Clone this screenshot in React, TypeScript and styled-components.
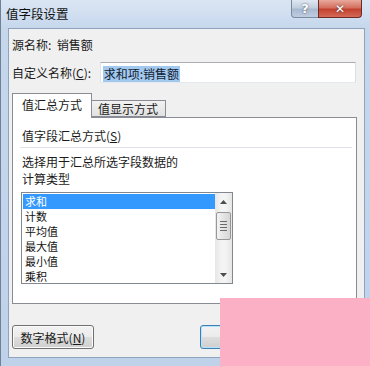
import styled, { createGlobalStyle } from 'styled-components';

const GlobalStyle = createGlobalStyle`
  html, body {
    margin: 0;
    padding: 0;
    background: #ffffff;
  }
  body {
    font-family: 'Noto Sans CJK SC', 'Noto Sans', sans-serif;
    font-size: 12px;
    color: #1a1a1a;
  }
`;

const Window = styled.div`
  position: relative;
  width: 370px;
  height: 366px;
  overflow: hidden;
  box-sizing: border-box;
  border-left: 1px solid #6f8197;
  background: linear-gradient(to bottom, #dbe6f4 0px, #c6d7ec 28px, #bfd2ea 100%);
`;

const TitleBar = styled.div`
  height: 28px;
  display: flex;
  align-items: flex-start;
`;

const Title = styled.div`
  padding: 6px 0 0 5px;
  font-size: 12.5px;
  line-height: 16px;
  color: #111;
`;

const Captions = styled.div`
  margin-left: auto;
  margin-right: 8px;
  display: flex;
`;

const CaptionButton = styled.div<{ $close?: boolean }>`
  width: ${({ $close }) => ($close ? 44 : 28)}px;
  height: 18px;
  box-sizing: border-box;
  border: 1px solid ${({ $close }) => ($close ? '#6e2b24' : '#7a8aa0')};
  border-top: none;
  border-radius: ${({ $close }) => ($close ? '0 0 4px 0' : '0 0 0 4px')};
  margin-left: ${({ $close }) => ($close ? -1 : 0)}px;
  background: ${({ $close }) =>
    $close
      ? 'linear-gradient(to bottom, #e8a99d 0%, #d4705f 45%, #c2412e 55%, #d66a58 100%)'
      : 'linear-gradient(to bottom, #dfe7f1 0%, #c3cfdf 45%, #a9b9cf 55%, #bfcde0 100%)'};
  display: flex;
  align-items: center;
  justify-content: center;
  color: #fff;
  font-family: 'DejaVu Sans', sans-serif;
  font-weight: bold;
  font-size: ${({ $close }) => ($close ? 12 : 13)}px;
  text-shadow: 0 0 2px rgba(40, 50, 70, 0.9);
`;

const Client = styled.div`
  margin: 0 5px 0 7px;
  height: 330px;
  box-sizing: border-box;
  border: 1px solid #8ea3bd;
  background: #f0f0f0;
  padding: 8px 8px 0 3px;
  display: flex;
  flex-direction: column;
`;

const Line = styled.div`
  line-height: 16px;
  height: 16px;
  white-space: nowrap;
`;

const NameRow = styled.div`
  margin-top: 9px;
  display: flex;
  align-items: center;
  height: 21px;
`;

const Label = styled.div`
  width: 88px;
  line-height: 16px;
  white-space: nowrap;
`;

const TextBox = styled.div`
  width: 257px;
  height: 21px;
  box-sizing: border-box;
  border: 1px solid #abadb3;
  border-color: #abadb3 #dbdfe6 #e3e9ef #e2e3ea;
  background: #fff;
  padding: 2px 0 0 2px;
`;

const Selected = styled.span`
  background: #a3c8ee;
  color: #0f1c33;
  line-height: 16px;
  display: inline-block;
  padding: 0 1px;
`;

const TabStrip = styled.div`
  margin-top: 10px;
  display: flex;
  align-items: flex-end;
  height: 24px;
  position: relative;
  z-index: 1;
`;

const Tab = styled.div<{ $active?: boolean }>`
  box-sizing: border-box;
  height: ${({ $active }) => ($active ? 25 : 17)}px;
  margin-bottom: ${({ $active }) => ($active ? -1 : 0)}px;
  border: 1px solid #898c95;
  border-bottom: ${({ $active }) => ($active ? 'none' : '1px solid #898c95')};
  background: ${({ $active }) =>
    $active ? '#ffffff' : 'linear-gradient(to bottom, #f2f2f2, #e1e1e1)'};
  padding: ${({ $active }) => ($active ? '3px 9px 0 9px' : '0 6px')};
  margin-left: ${({ $active }) => ($active ? 0 : -1)}px;
  line-height: 15px;
  white-space: nowrap;
  font-size: 12px;
  width: ${({ $active }) => ($active ? 80 : 75)}px;
`;

const Panel = styled.div`
  width: 345px;
  height: 187px;
  box-sizing: border-box;
  border: 1px solid #898c95;
  background: #fff;
  padding: 10px 0 0 9px;
`;

const Separator = styled.div`
  margin: 3px 4px 5px -2px;
  height: 1px;
  background: #dfe3e8;
`;

const Para = styled.div`
  line-height: 17px;
  white-space: nowrap;
`;

const ListBox = styled.div`
  margin: 5px 0 0 -1px;
  width: 212px;
  height: 92px;
  box-sizing: border-box;
  border: 1px solid #828790;
  display: flex;
  padding: 1px 0 0 1px;
  overflow: hidden;
`;

const Items = styled.div`
  flex: 1;
`;

const Item = styled.div<{ $selected?: boolean }>`
  height: 15px;
  line-height: 15px;
  font-size: 11px;
  padding-left: 2px;
  background: ${({ $selected }) => ($selected ? '#3399ff' : 'transparent')};
  color: ${({ $selected }) => ($selected ? '#fff' : '#111')};
  white-space: nowrap;
`;

const ScrollBar = styled.div`
  width: 17px;
  margin-top: -1px;
  display: flex;
  flex-direction: column;
  align-items: center;
  background: linear-gradient(to right, #e6e6e6, #f4f4f4 40%, #f4f4f4 60%, #e6e6e6);
`;

const Arrow = styled.div`
  height: 17px;
  width: 17px;
  display: flex;
  align-items: center;
  justify-content: center;
`;

const Thumb = styled.div`
  margin-top: 2px;
  width: 15px;
  height: 28px;
  box-sizing: border-box;
  border: 1px solid #979797;
  border-radius: 2px;
  background: linear-gradient(to right, #f3f3f3, #e4e4e4 50%, #d6d6d6);
  display: flex;
  flex-direction: column;
  align-items: center;
  justify-content: center;
  gap: 2px;
`;

const Grip = styled.div`
  width: 7px;
  height: 1px;
  background: #6a6a6a;
`;

const ScrollFill = styled.div`
  flex: 1;
`;

const ButtonRow = styled.div`
  margin-top: 21px;
  display: flex;
  align-items: center;
`;

const Button = styled.div<{ $focus?: boolean }>`
  height: 24px;
  box-sizing: border-box;
  border: 1px solid ${({ $focus }) => ($focus ? '#3c7fb1' : '#707070')};
  border-radius: 3px;
  background: linear-gradient(to bottom, #f2f2f2 0%, #ebebeb 48%, #dddddd 52%, #cfcfcf 100%);
  box-shadow: ${({ $focus }) => ($focus ? 'inset 0 0 0 1px #b7e2fc' : 'inset 0 0 0 1px #fbfbfb')};
  display: flex;
  align-items: center;
  justify-content: center;
  width: ${({ $focus }) => ($focus ? 75 : 82)}px;
  white-space: nowrap;
`;

const RightButtons = styled.div`
  margin-left: auto;
  display: flex;
  gap: 6px;
`;

const Mask = styled.div`
  position: absolute;
  left: 219px;
  top: 298px;
  width: 151px;
  height: 68px;
  background: #fbb0c5;
`;

const U = styled.span`
  text-decoration: underline;
`;

const items = ['求和', '计数', '平均值', '最大值', '最小值', '乘积'];

const UpArrow = () => (
  <svg width="7" height="4" viewBox="0 0 7 4">
    <path d="M0 4 L3.5 0 L7 4 Z" fill="#4d4d4d" />
  </svg>
);

const DownArrow = () => (
  <svg width="7" height="4" viewBox="0 0 7 4">
    <path d="M0 0 L3.5 4 L7 0 Z" fill="#4d4d4d" />
  </svg>
);

export default function App() {
  return (
    <>
      <GlobalStyle />
      <Window>
        <TitleBar>
          <Title>值字段设置</Title>
          <Captions>
            <CaptionButton>?</CaptionButton>
            <CaptionButton $close>✕</CaptionButton>
          </Captions>
        </TitleBar>
        <Client>
          <Line>源名称:&nbsp;&nbsp;销售额</Line>
          <NameRow>
            <Label>
              自定义名称(<U>C</U>):
            </Label>
            <TextBox>
              <Selected>求和项:销售额</Selected>
            </TextBox>
          </NameRow>
          <TabStrip>
            <Tab $active>值汇总方式</Tab>
            <Tab>值显示方式</Tab>
          </TabStrip>
          <Panel>
            <Line>
              值字段汇总方式(<U>S</U>)
            </Line>
            <Separator />
            <Para>选择用于汇总所选字段数据的</Para>
            <Para>计算类型</Para>
            <ListBox>
              <Items>
                {items.map((t, i) => (
                  <Item key={t} $selected={i === 0}>
                    {t}
                  </Item>
                ))}
              </Items>
              <ScrollBar>
                <Arrow>
                  <UpArrow />
                </Arrow>
                <Thumb>
                  <Grip />
                  <Grip />
                  <Grip />
                  <Grip />
                </Thumb>
                <ScrollFill />
                <Arrow>
                  <DownArrow />
                </Arrow>
              </ScrollBar>
            </ListBox>
          </Panel>
          <ButtonRow>
            <Button>
              数字格式(<U>N</U>)
            </Button>
            <RightButtons>
              <Button $focus>确定</Button>
              <Button $focus>取消</Button>
            </RightButtons>
          </ButtonRow>
        </Client>
        <Mask />
      </Window>
    </>
  );
}
